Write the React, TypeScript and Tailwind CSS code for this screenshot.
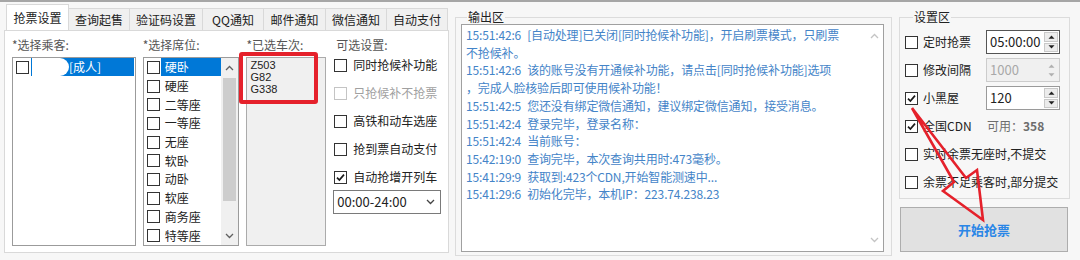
import React from "react";

const Box = ({ checked = false, disabled = false }: { checked?: boolean; disabled?: boolean }) => (
  <span
    className={`flex h-[13px] w-[13px] shrink-0 items-center justify-center border bg-white ${
      disabled ? "border-[#c4c4c4]" : "border-[#333333]"
    }`}
  >
    {checked && (
      <svg width="9" height="9" viewBox="0 0 9 9">
        <path d="M1 4.6 L3.4 7 L8 1.6" fill="none" stroke="#1a1a1a" strokeWidth="1.7" />
      </svg>
    )}
  </span>
);

const Chevron = ({ up = false, color = "#606060" }: { up?: boolean; color?: string }) => (
  <svg width="9" height="6" viewBox="0 0 9 6">
    <path d={up ? "M1 5 L4.5 1.5 L8 5" : "M1 1 L4.5 4.5 L8 1"} fill="none" stroke={color} strokeWidth="1.3" />
  </svg>
);

const SpinArrows = () => (
  <div className="flex h-full w-[15px] flex-col gap-[1px] py-[1px] pr-[1px]">
    <div className="flex flex-1 items-center justify-center border border-[#c9c9c9] bg-[#ececec]">
      <svg width="7" height="4" viewBox="0 0 7 4">
        <path d="M0.5 3.8 L3.5 0.5 L6.5 3.8 Z" fill="#222" />
      </svg>
    </div>
    <div className="flex flex-1 items-center justify-center border border-[#c9c9c9] bg-[#ececec]">
      <svg width="7" height="4" viewBox="0 0 7 4">
        <path d="M0.5 0.2 L3.5 3.5 L6.5 0.2 Z" fill="#222" />
      </svg>
    </div>
  </div>
);

const seats = ["硬卧", "硬座", "二等座", "一等座", "无座", "软卧", "动卧", "软座", "商务座", "特等座"];

const options = [
  { label: "同时抢候补功能" },
  { label: "只抢候补不抢票", disabled: true },
  { label: "高铁和动车选座" },
  { label: "抢到票自动支付" },
  { label: "自动抢增开列车", checked: true },
];

const logs = [
  ["15:51:42:6", "[自动处理]已关闭[同时抢候补功能]，开启刷票模式，只刷票"],
  ["", "不抢候补。"],
  ["15:51:42:6", "该的账号没有开通候补功能，请点击[同时抢候补功能]选项"],
  ["", "，完成人脸核验后即可使用候补功能！"],
  ["15:51:42:5", "您还没有绑定微信通知，建议绑定微信通知，接受消息。"],
  ["15:51:42:4", "登录完毕，登录名称："],
  ["15:51:42:4", "当前账号："],
  ["15:42:19:0", "查询完毕，本次查询共用时:473毫秒。"],
  ["15:41:29:9", "获取到:423个CDN,开始智能测速中..."],
  ["15:41:29:6", "初始化完毕，本机IP：223.74.238.23"],
];

const tabs = [
  { label: "查询起售", w: "w-[61px]" },
  { label: "验证码设置", w: "w-[73px]" },
  { label: "QQ通知", w: "w-[61px]" },
  { label: "邮件通知", w: "w-[62px]" },
  { label: "微信通知", w: "w-[61px]" },
  { label: "自动支付", w: "w-[61px]" },
];

export default function App() {
  return (
    <div className="relative h-[260px] w-[1080px] overflow-hidden border-t-2 border-[#a6a6a6] bg-[#f7f7f7] font-['Microsoft_YaHei','Noto_Sans_CJK_SC',sans-serif] text-[12px] leading-[14px] text-[#222]">
      <div className="flex pl-[4px]">
        {/* tab control */}
        <div className="flex w-[445px] flex-col">
          <div className="flex h-[28px] items-end pl-[2px]">
            <div className="flex h-[26px] w-[63px] items-center justify-center border-x border-t border-[#d9d9d9] bg-white">
              抢票设置
            </div>
            {tabs.map((t) => (
              <div
                key={t.label}
                className={`flex h-[22px] items-center justify-center border-r border-t border-[#d9d9d9] bg-[#f0f0f0] ${t.w}`}
              >
                {t.label}
              </div>
            ))}
          </div>
          <div className="flex h-[223px] gap-[7px] border border-[#d9d9d9] bg-white px-[7px] pt-[7px]">
            {/* passengers */}
            <div className="flex w-[124px] flex-col">
              <div className="h-[14px] text-[#555]">*选择乘客:</div>
              <div className="mt-[5px] h-[189px] border border-[#9b9b9b] bg-white">
                <div className="flex h-[18.7px] items-center pl-[3px] pr-[1px]">
                  <Box />
                  <div className="ml-[2px] flex h-[18px] flex-1 items-center bg-[#0078d7] text-white">
                    <div className="ml-[1px] h-full w-[37px] rounded-r-full bg-white" />
                    <span>[成人]</span>
                  </div>
                </div>
              </div>
            </div>
            {/* seats */}
            <div className="flex w-[97px] flex-col">
              <div className="h-[14px] text-[#555]">*选择席位:</div>
              <div className="mt-[5px] flex h-[189px] border border-[#9b9b9b] bg-white">
                <div className="flex flex-1 flex-col">
                  {seats.map((s, i) => (
                    <div key={s} className="flex h-[18.7px] items-center pl-[3px]">
                      <Box />
                      <span
                        className={`ml-[1px] flex h-[18px] flex-1 items-center pl-[4px] ${
                          i === 0 ? "bg-[#0078d7] text-white" : ""
                        }`}
                      >
                        {s}
                      </span>
                    </div>
                  ))}
                </div>
                <div className="flex w-[17px] flex-col items-center bg-[#f0f0f0]">
                  <div className="flex h-[20px] items-center">
                    <Chevron up />
                  </div>
                  <div className="h-[123px] w-[13px] bg-[#cdcdcd]" />
                  <div className="flex flex-1 items-end pb-[6px]">
                    <Chevron />
                  </div>
                </div>
              </div>
            </div>
            {/* selected trains */}
            <div className="flex w-[80px] flex-col">
              <div className="h-[14px] text-[#555]">*已选车次:</div>
              <div className="mt-[5px] h-[189px] border border-[#ababab] bg-[#f0f0f0] pl-[3px] pt-[1px] font-['Liberation_Sans',sans-serif] text-[11px] leading-[12px] text-[#222]">
                <div>Z503</div>
                <div>G82</div>
                <div>G338</div>
              </div>
            </div>
            {/* options */}
            <div className="flex w-[108px] flex-col">
              <div className="h-[14px] pl-[3px] text-[#555]">可选设置:</div>
              <div className="mt-[5px] flex flex-col gap-[12px]">
                {options.map((o) => (
                  <div key={o.label} className="flex h-[16px] items-center gap-[6px] pl-[1px]">
                    <Box checked={o.checked} disabled={o.disabled} />
                    <span className={o.disabled ? "text-[#a0a0a0]" : ""}>{o.label}</span>
                  </div>
                ))}
              </div>
              <div className="mt-[5px] flex h-[24px] items-center justify-between border border-[#7a7a7a] bg-white pl-[3px] pr-[5px] text-[13px]">
                <span>00:00-24:00</span>
                <Chevron color="#444" />
              </div>
            </div>
          </div>
        </div>

        {/* output */}
        <fieldset className="ml-[6px] mt-[8px] h-[246px] w-[437px] border border-[#dcdcdc] pb-[3px] pl-[5px] pr-[7px]">
          <legend className="ml-[6px] px-[1px] leading-[14px]">输出区</legend>
          <div className="flex h-[228px] border border-[#a0a0a0] bg-white">
            <div className="flex-1 pl-[4px] pt-[1px] leading-[17.7px] tracking-[-0.15px] text-[#4484c8]">
              {logs.map(([t, m], i) => (
                <div key={i} className="whitespace-nowrap">
                  {t && <span className="mr-[6px]">{t}</span>}
                  {m}
                </div>
              ))}
            </div>
            <div className="flex w-[17px] flex-col items-center justify-between py-[8px]">
              <Chevron up color="#c4c4c4" />
              <Chevron color="#c4c4c4" />
            </div>
          </div>
        </fieldset>

        {/* settings */}
        <div className="ml-[7px] mt-[8px] flex w-[171px] flex-col">
          <fieldset className="h-[189px] border border-[#dcdcdc] pb-[2px] pl-[5px] pr-[9px] pt-[4px]">
            <legend className="ml-[8px] px-[1px] leading-[14px]">设置区</legend>
            <div className="flex h-[28px] items-center justify-between">
              <div className="flex items-center gap-[5px]">
                <Box />
                <span>定时抢票</span>
              </div>
              <div className="flex h-[24px] w-[74px] items-center border border-[#555] bg-white pl-[3px] text-[13px]">
                <span className="flex-1">05:00:00</span>
                <SpinArrows />
              </div>
            </div>
            <div className="flex h-[28px] items-center justify-between">
              <div className="flex items-center gap-[5px]">
                <Box />
                <span>修改间隔</span>
              </div>
              <div className="flex h-[24px] w-[74px] items-center border border-[#cccccc] bg-[#f0f0f0] pl-[3px] text-[13px] text-[#a8a8a8]">
                <span className="flex-1">1000</span>
                <div className="flex h-full w-[15px] flex-col items-center justify-center gap-[5px]">
                  <svg width="7" height="4" viewBox="0 0 7 4">
                    <path d="M0.5 3.8 L3.5 0.5 L6.5 3.8 Z" fill="#b0b0b0" />
                  </svg>
                  <svg width="7" height="4" viewBox="0 0 7 4">
                    <path d="M0.5 0.2 L3.5 3.5 L6.5 0.2 Z" fill="#b0b0b0" />
                  </svg>
                </div>
              </div>
            </div>
            <div className="flex h-[28px] items-center justify-between">
              <div className="flex items-center gap-[5px]">
                <Box checked />
                <span>小黑屋</span>
              </div>
              <div className="flex h-[24px] w-[74px] items-center border border-[#9a9a9a] bg-white pl-[3px] text-[13px]">
                <span className="flex-1">120</span>
                <SpinArrows />
              </div>
            </div>
            <div className="flex h-[28px] items-center justify-between">
              <div className="flex items-center gap-[5px]">
                <Box checked />
                <span>全国CDN</span>
              </div>
              <div className="w-[74px] pl-[1px] text-[#6d6d6d]">
                可用：<span className="font-bold">358</span>
              </div>
            </div>
            <div className="flex h-[28px] items-center gap-[5px]">
              <Box />
              <span>实时余票无座时,不提交</span>
            </div>
            <div className="flex h-[28px] items-center gap-[5px]">
              <Box />
              <span>余票不足乘客时,部分提交</span>
            </div>
          </fieldset>
          <button className="ml-[1px] mt-[8px] h-[45px] w-[168px] border border-[#adadad] bg-[#e1e1e1] text-[13px] font-bold text-[#2a86e6]">
            开始抢票
          </button>
        </div>
      </div>

      {/* red highlight box */}
      <div className="absolute left-[239px] top-[50px] h-[52px] w-[79px] rounded-[3px] border-4 border-[#e5212b]" />

      {/* red arrow */}
      <svg className="pointer-events-none absolute left-0 top-0" width="1080" height="260" viewBox="0 0 1080 260">
        <polygon
          points="912,106 954,180 943,189 983,218 977,168 966,176"
          fill="none"
          stroke="#e5212b"
          strokeWidth="2.6"
          strokeLinejoin="miter"
        />
      </svg>
    </div>
  );
}
